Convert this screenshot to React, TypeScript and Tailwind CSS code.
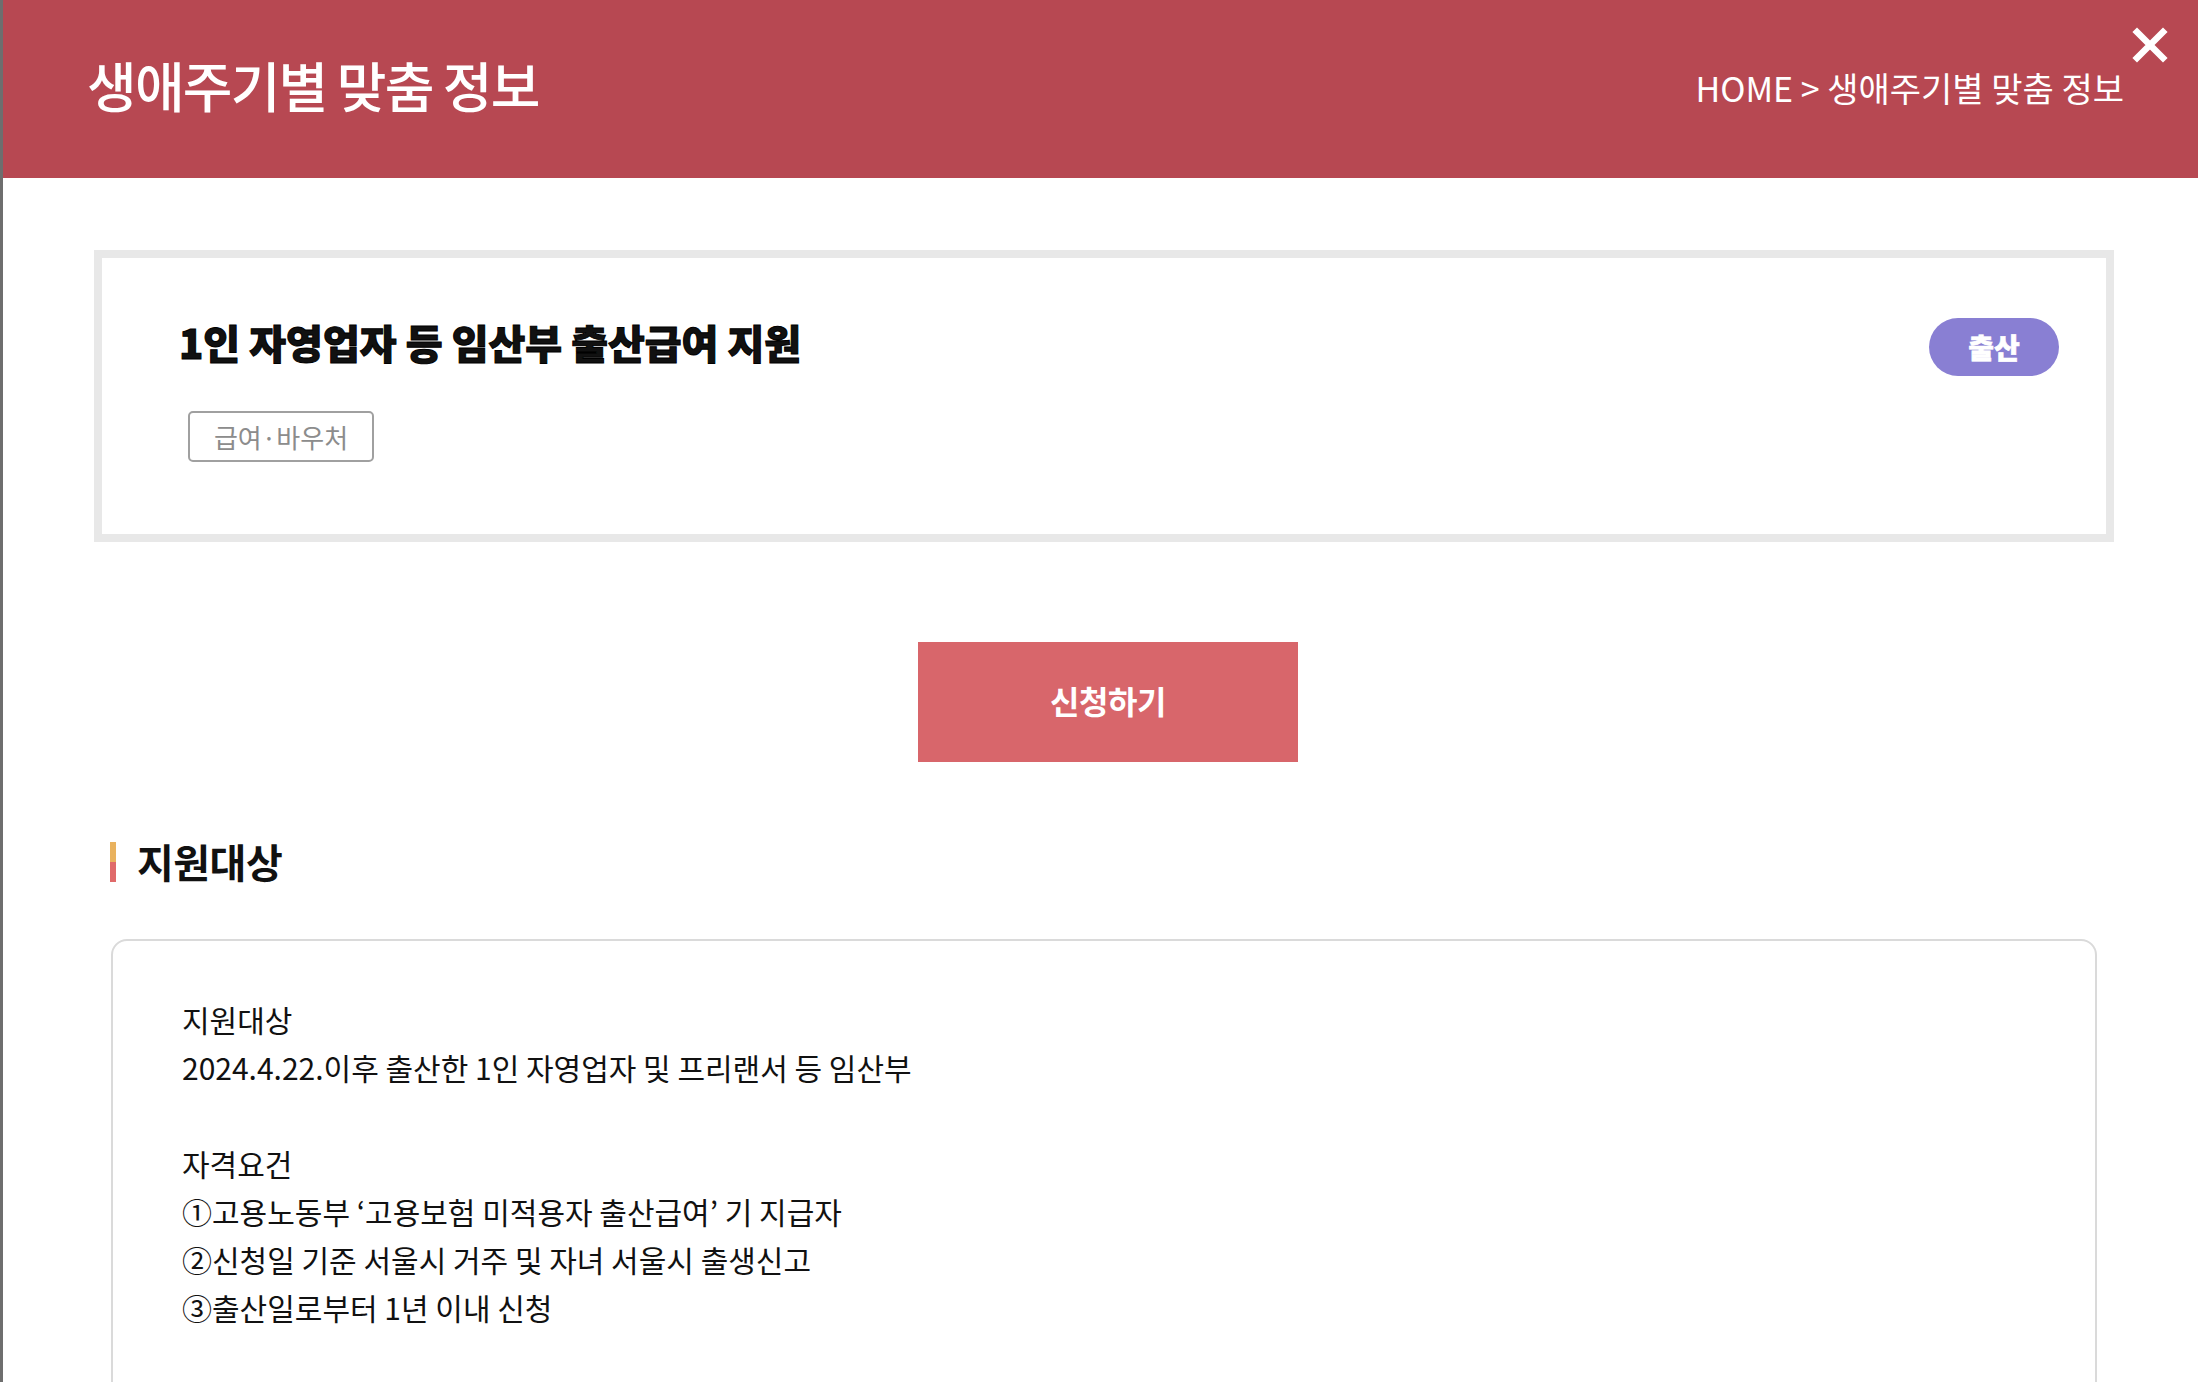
const FONT = "font-['Noto_Sans_CJK_KR','Noto_Sans',sans-serif]";

const LINES = [
  '지원대상',
  '2024.4.22.이후 출산한 1인 자영업자 및 프리랜서 등 임산부',
  '',
  '자격요건',
  '①고용노동부 ‘고용보험 미적용자 출산급여’ 기 지급자',
  '②신청일 기준 서울시 거주 및 자녀 서울시 출생신고',
  '③출산일로부터 1년 이내 신청',
];

export default function App() {
  return (
    <div className={`${FONT} min-h-screen bg-white border-l-[3px] border-[#6e6e6e] text-[#111]`}>
      <header className="relative flex h-[178px] items-center justify-between bg-[#b74852] pl-[84px] pr-[74px] text-white">
        <h1 className="-mt-[8px] text-[54px] font-medium leading-none tracking-[-1.8px]">생애주기별 맞춤 정보</h1>
        <p className="-mt-[2px] text-[34px] leading-none">HOME &gt; 생애주기별 맞춤 정보</p>
        <button className="absolute right-[30px] top-[27px] h-[36px] w-[36px]" aria-label="닫기">
          <svg viewBox="0 0 36 36" className="h-full w-full">
            <path d="M5 5 L31 31 M31 5 L5 31" stroke="white" strokeWidth="6.5" strokeLinecap="square" />
          </svg>
        </button>
      </header>

      <main className="pl-[91px] pr-[84px] pt-[72px]">
        <section className="flex h-[292px] items-start justify-between border-8 border-[#e8e8e8] bg-white pl-[77px] pr-[47px] pt-[60px]">
          <div>
            <h2 className="text-[40px] font-black leading-[48px] [-webkit-text-stroke:1px_#000]">1인 자영업자 등 임산부 출산급여 지원</h2>
            <span className="ml-[9px] mt-[45px] inline-flex h-[51px] w-[186px] items-center justify-center rounded-[5px] border-2 border-[#a0a0a0] text-[26px] text-[#8c8c8c]">
              급여·바우처
            </span>
          </div>
          <span className="flex h-[58px] w-[130px] items-center justify-center rounded-full bg-[#897fd3] text-[28px] font-black text-white [-webkit-text-stroke:0.6px_#fff]">
            출산
          </span>
        </section>

        <div className="flex justify-center pt-[100px]">
          <button className="ml-[8px] h-[120px] w-[380px] bg-[#d8666b] pb-[4px] text-[32px] font-bold tracking-[-0.5px] text-white">
            신청하기
          </button>
        </div>

        <div className="ml-[16px] mt-[80px] flex items-center gap-[21px]">
          <span className="flex h-[40px] w-[6px] flex-col">
            <span className="flex-1 bg-[#e9b25e]" />
            <span className="flex-1 bg-[#e06a6a]" />
          </span>
          <h3 className="-mt-[3px] text-[40px] font-bold leading-none tracking-[-0.5px]">지원대상</h3>
        </div>

        <div className="mx-[17px] mt-[57px] min-h-[500px] rounded-[16px] border-2 border-[#dadada] pl-[69px] pt-[54px]">
          {LINES.map((line, i) => (
            <p key={i} className="h-[48px] text-[30px] leading-[48px]">
              {line}
            </p>
          ))}
        </div>
      </main>
    </div>
  );
}
